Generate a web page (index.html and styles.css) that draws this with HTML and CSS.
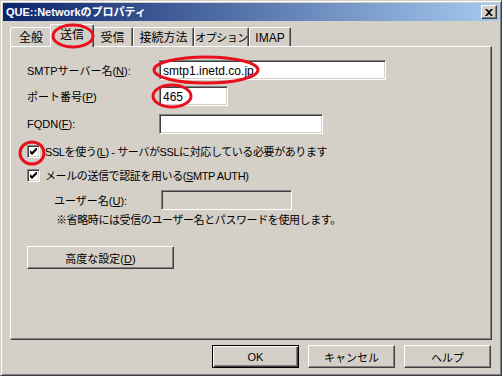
FILE: index.html
```html
<!DOCTYPE html>
<html lang="ja">

<head>
    <meta charset="UTF-8">
    <title>QUE::Networkのプロパティ</title>
    <link rel="stylesheet" href="styles.css">
</head>

<body>
    <div class="window">
        <!-- Title bar -->
        <div class="titlebar">
            <span class="title">QUE::Networkのプロパティ</span>
            <span class="close-btn">
                <svg width="8" height="7" viewBox="0 0 8 7"><path d="M0 0h2l2 2 2-2h2L5 3.5 8 7H6L4 5 2 7H0l3-3.5z" fill="#000"/></svg>
            </span>
        </div>

        <!-- Tabs -->
        <div class="tabs">
            <div class="tab t-general">全般</div>
            <div class="tab active">送信</div>
            <div class="tab t-recv">受信</div>
            <div class="tab t-conn">接続方法</div>
            <div class="tab t-opt">オプション</div>
            <div class="tab t-imap">IMAP</div>
        </div>

        <!-- Tab panel -->
        <div class="panel">
            <div class="row">
                <label class="label">SMTPサーバー名(<u>N</u>):</label>
                <div class="field w-server">smtp1.inetd.co.jp</div>
            </div>
            <div class="row">
                <label class="label">ポート番号(<u>P</u>)</label>
                <div class="field w-port">465</div>
            </div>
            <div class="row">
                <label class="label">FQDN(<u>F</u>):</label>
                <div class="field w-fqdn"></div>
            </div>

            <div class="check-row first">
                <span class="checkbox">
                    <svg width="7" height="7" viewBox="0 0 7 7"><path d="M0 2v3l2 2 5-5V-1L2 4z" fill="#000"/></svg>
                </span>
                <span class="tight">SSLを使う(<u>L</u>) - サーバがSSLに対応している必要があります</span>
            </div>
            <div class="check-row">
                <span class="checkbox">
                    <svg width="7" height="7" viewBox="0 0 7 7"><path d="M0 2v3l2 2 5-5V-1L2 4z" fill="#000"/></svg>
                </span>
                <span class="tight">メールの送信で認証を用いる(<u>S</u>MTP AUTH)</span>
            </div>

            <div class="row user-row">
                <label class="label sub">ユーザー名(<u>U</u>):</label>
                <div class="field w-user disabled"></div>
            </div>
            <p class="note tight">※省略時には受信のユーザー名とパスワードを使用します。</p>

            <button class="btn advanced">高度な設定(<u>D</u>)</button>
        </div>

        <!-- Dialog buttons -->
        <div class="buttons">
            <button class="btn default">OK</button>
            <button class="btn">キャンセル</button>
            <button class="btn">ヘルプ</button>
        </div>

        <!-- red annotation marks drawn over the dialog -->
        <svg class="marks" width="502" height="376">
            <ellipse cx="72" cy="35" rx="20" ry="11" />
            <ellipse cx="205" cy="69" rx="52" ry="13" />
            <ellipse cx="171" cy="95" rx="19" ry="11" />
            <ellipse cx="31" cy="152" rx="12" ry="11" />
        </svg>
    </div>
</body>

</html>
```

FILE: styles.css
```css
body {
    margin: 0;
    padding: 0;
    font-family: "Liberation Sans", "Noto Sans CJK JP", sans-serif;
    font-size: 11px;
    color: #000;
    background-color: #d4d0c8;
}

.window {
    position: relative;
    width: 502px;
    height: 376px;
    box-sizing: border-box;
    background-color: #d4d0c8;
    border: 1px solid;
    border-color: #d4d0c8 #404040 #404040 #d4d0c8;
    box-shadow: inset 1px 1px #fff, inset -1px -1px #808080;
    padding: 2px;
}

.titlebar {
    position: relative;
    height: 18px;
    background: linear-gradient(to right, #0a246a, #a6caf0);
    color: #fff;
    font-weight: bold;
    font-size: 11px;
    line-height: 18px;
    padding-left: 3px;
}

.close-btn {
    position: absolute;
    right: 2px;
    top: 2px;
    width: 16px;
    height: 14px;
    box-sizing: border-box;
    background-color: #d4d0c8;
    border: 1px solid;
    border-color: #fff #404040 #404040 #fff;
    box-shadow: inset -1px -1px #808080;
    display: flex;
    align-items: center;
    justify-content: center;
}

.tabs {
    display: flex;
    align-items: flex-end;
    height: 22px;
    margin: 3px 0 0 7px;
    position: relative;
    z-index: 1;
}

.tab {
    height: 19px;
    box-sizing: border-box;
    padding-top: 2px;
    text-align: center;
    border: 1px solid;
    border-bottom: none;
    border-color: #fff #404040 transparent #fff;
    box-shadow: inset -1px 0 #808080;
    border-radius: 2px 2px 0 0;
    line-height: 16px;
    font-size: 12px;
    background-color: #d4d0c8;
    white-space: nowrap;
}

.t-general {
    width: 42px;
}

.t-recv {
    width: 41px;
}

.t-conn {
    width: 61px;
}

.t-opt {
    width: 55px;
    font-size: 11px;
    letter-spacing: -0.5px;
}

.t-imap {
    width: 42px;
}

.tab.active {
    width: 44px;
    height: 23px;
    margin: 0 -2px -1px;
    position: relative;
    z-index: 2;
}

.panel {
    width: 482px;
    height: 294px;
    box-sizing: border-box;
    margin-left: 7px;
    border: 1px solid;
    border-color: #fff #404040 #404040 #fff;
    box-shadow: inset -1px -1px #808080;
    padding: 13px 16px;
}

.row {
    display: flex;
    align-items: center;
    height: 20px;
    margin-bottom: 6px;
}

.row:nth-child(2) {
    margin-bottom: 8px;
}

.label {
    width: 132px;
    flex-shrink: 0;
}

.field {
    height: 20px;
    box-sizing: border-box;
    background-color: #fff;
    border: 1px solid;
    border-color: #808080 #fff #fff #808080;
    box-shadow: inset 1px 1px #404040, inset -1px -1px #d4d0c8;
    padding: 2px 3px;
    line-height: 16px;
    font-size: 12px;
}

.w-server {
    width: 227px;
}

.w-port {
    width: 69px;
}

.w-fqdn {
    width: 164px;
}

.w-user {
    width: 131px;
}

.field.disabled {
    background-color: #d4d0c8;
}

.check-row {
    display: flex;
    align-items: center;
    gap: 5px;
    height: 18px;
    margin-bottom: 6px;
}

.check-row.first {
    margin-top: 8px;
}

.tight {
    letter-spacing: -0.4px;
}

.checkbox {
    width: 13px;
    height: 13px;
    box-sizing: border-box;
    background-color: #fff;
    border: 1px solid;
    border-color: #808080 #fff #fff #808080;
    box-shadow: inset 1px 1px #404040, inset -1px -1px #d4d0c8;
    display: flex;
    align-items: center;
    justify-content: center;
}

.user-row {
    margin-top: 0;
    margin-bottom: 0;
}

.label.sub {
    width: 107px;
    padding-left: 27px;
}

.note {
    margin: 2px 0 0 29px;
    line-height: 16px;
}

.btn {
    font-family: inherit;
    font-size: 11px;
    color: #000;
    background-color: #d4d0c8;
    height: 23px;
    box-sizing: border-box;
    border: 1px solid;
    border-color: #fff #404040 #404040 #fff;
    box-shadow: inset -1px -1px #808080;
    padding: 0;
}

.advanced {
    display: block;
    width: 147px;
    margin-top: 18px;
}

.buttons {
    display: flex;
    justify-content: flex-end;
    gap: 9px;
    margin: 5px 8px 0 0;
}

.buttons .btn {
    width: 87px;
}

.btn.default {
    border: 1px solid #000;
    box-shadow: inset 1px 1px #fff, inset -1px -1px #404040, inset -2px -2px #808080;
}

.marks {
    position: absolute;
    left: 0;
    top: 0;
    z-index: 10;
    pointer-events: none;
}

.marks ellipse {
    fill: none;
    stroke: #e8101c;
    stroke-width: 3;
}
```
